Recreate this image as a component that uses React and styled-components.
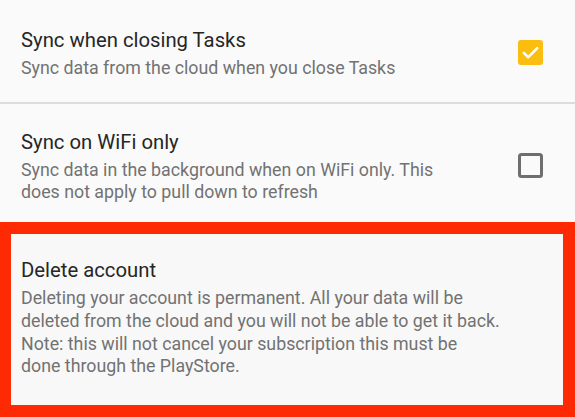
import React from "react";
import styled, { createGlobalStyle } from "styled-components";

const GlobalStyle = createGlobalStyle`
  html, body {
    margin: 0;
    padding: 0;
    background: #fafafa;
  }
  body {
    font-family: Roboto, "Noto Sans", "Liberation Sans", sans-serif;
    -webkit-font-smoothing: antialiased;
  }
`;

const Screen = styled.div`
  width: 575px;
  height: 417px;
  overflow: hidden;
  background: #fafafa;
  display: flex;
  flex-direction: column;
`;

const Row = styled.div`
  display: flex;
  align-items: center;
  padding: ${(p) => p.$pad};
  border-bottom: ${(p) => (p.$divider ? "2px solid #dcdcdc" : "none")};
`;

const TextBlock = styled.div`
  flex: 1;
  min-width: 0;
  margin-right: ${(p) => p.$gap || "0px"};
`;

const Title = styled.div`
  font-size: 20.3px;
  font-weight: 400;
  line-height: 28px;
  color: #262626;
`;

const Summary = styled.div`
  margin-top: 3px;
  font-size: 17.8px;
  line-height: 22.7px;
  color: #727272;
`;

const Highlight = styled.div`
  border: 12px solid #fe2a03;
  border-left-width: 11px;
  background: #f8f8f8;
  flex: 1;
  display: flex;
`;

const CheckWrap = styled.div`
  width: 25px;
  height: 25px;
  flex: none;
  display: flex;
`;

function CheckBox({ checked }) {
  return (
    <CheckWrap>
      {checked ? (
        <svg width="25" height="25" viewBox="0 0 25 25">
          <rect x="0" y="0" width="25" height="25" rx="3" fill="#fcbd11" />
          <path
            d="M5.8 12.9 L10.3 17.2 L19.2 8.2"
            fill="none"
            stroke="#ffffff"
            strokeWidth="2.6"
            strokeLinecap="round"
            strokeLinejoin="round"
          />
        </svg>
      ) : (
        <svg width="25" height="25" viewBox="0 0 25 25">
          <rect
            x="1.5"
            y="1.5"
            width="22"
            height="22"
            rx="2"
            fill="none"
            stroke="#6e6e6e"
            strokeWidth="3"
          />
        </svg>
      )}
    </CheckWrap>
  );
}

export default function App() {
  return (
    <Screen>
      <GlobalStyle />
      <Row $divider $pad="26px 32px 22px 21px">
        <TextBlock $gap="60px">
          <Title>Sync when closing Tasks</Title>
          <Summary>Sync data from the cloud when you close Tasks</Summary>
        </TextBlock>
        <CheckBox checked />
      </Row>
      <Row $pad="24px 32px 18px 21px">
        <TextBlock $gap="62px">
          <Title>Sync on WiFi only</Title>
          <Summary>
            Sync data in the background when on WiFi only. This does not apply
            to pull down to refresh
          </Summary>
        </TextBlock>
      <CheckBox />
      </Row>
      <Highlight>
        <Row $pad="22px 30px 27px 10px">
          <TextBlock>
            <Title>Delete account</Title>
            <Summary>
              Deleting your account is permanent. All your data will be
              <br />
              deleted from the cloud and you will not be able to get it back.
              <br />
              Note: this will not cancel your subscription this must be
              <br />
              done through the PlayStore.
            </Summary>
          </TextBlock>
        </Row>
      </Highlight>
    </Screen>
  );
}
